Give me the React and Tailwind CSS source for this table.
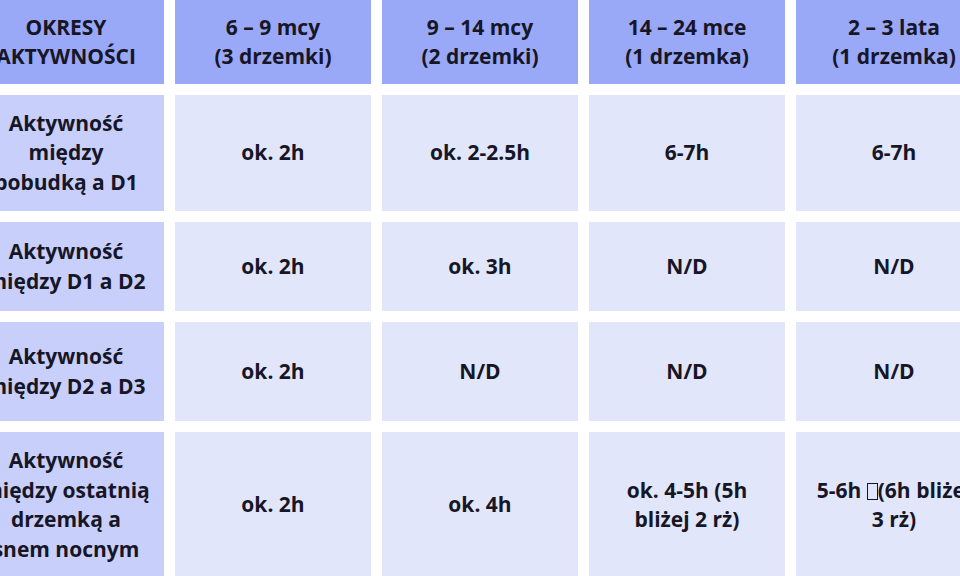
import React from "react";

const H = "bg-[#9aa8f8]";
const F = "bg-[#c8cffa]";
const D = "bg-[#e2e6fb]";

function Cell({ bg, children }) {
  return (
    <div className={`${bg} flex items-center justify-center text-center px-[13px]`}>
      <div>{children}</div>
    </div>
  );
}

export default function App() {
  const rows = [
    ["Aktywność między pobudką a D1", "ok. 2h", "ok. 2-2.5h", "6-7h", "6-7h"],
    ["Aktywność między D1 a D2", "ok. 2h", "ok. 3h", "N/D", "N/D"],
    ["Aktywność między D2 a D3", "ok. 2h", "N/D", "N/D", "N/D"],
  ];
  return (
    <div
      className="w-[960px] h-[576px] overflow-hidden bg-white text-[#161626] text-[21px] leading-[29.5px] font-bold"
      style={{ fontFamily: '"Open Sans", "Noto Sans", sans-serif' }}
    >
      <div className="ml-[-32px] grid grid-cols-[196px_196px_196px_196px_196px] grid-rows-[84px_116px_89px_99px_146px] gap-x-[11px] gap-y-[11px] w-[1024px]">
        <Cell bg={H}>OKRESY<br />AKTYWNOŚCI</Cell>
        <Cell bg={H}>6 – 9 mcy<br />(3 drzemki)</Cell>
        <Cell bg={H}>9 – 14 mcy<br />(2 drzemki)</Cell>
        <Cell bg={H}>14 – 24 mce<br />(1 drzemka)</Cell>
        <Cell bg={H}>2 – 3 lata<br />(1 drzemka)</Cell>
        {rows.map((r, i) => (
          <React.Fragment key={i}>
            <Cell bg={F}>{r[0]}</Cell>
            <Cell bg={D}>{r[1]}</Cell>
            <Cell bg={D}>{r[2]}</Cell>
            <Cell bg={D}>{r[3]}</Cell>
            <Cell bg={D}>{r[4]}</Cell>
          </React.Fragment>
        ))}
        <Cell bg={F}>Aktywność między ostatnią drzemką a snem nocnym</Cell>
        <Cell bg={D}>ok. 2h</Cell>
        <Cell bg={D}>ok. 4h</Cell>
        <Cell bg={D}>ok. 4-5h (5h bliżej 2 rż)</Cell>
        <Cell bg={D}>
          5-6h{" "}
          <span className="inline-block w-[11px] h-[17px] border-[1.5px] border-[#161626] align-[-2px]" />
          (6h bliżej 3 rż)
        </Cell>
      </div>
    </div>
  );
}
